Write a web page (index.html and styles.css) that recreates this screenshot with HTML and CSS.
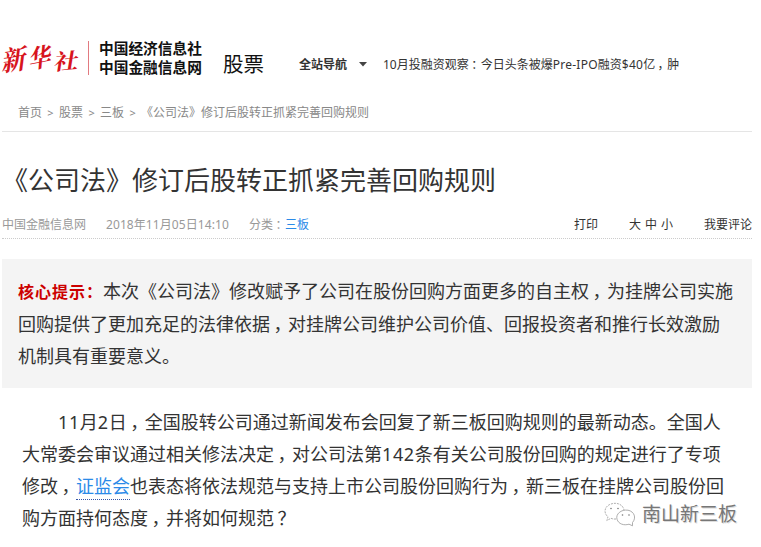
FILE: index.html
```html
<!DOCTYPE html>
<html lang="zh-CN">
<head>
<meta charset="utf-8">
<title>《公司法》修订后股转正抓紧完善回购规则</title>
<link rel="stylesheet" href="styles.css">
</head>
<body>
<div class="page">
  <header class="header">
    <div class="brush"><span class="b1">新</span><span class="b2">华</span><span class="b3">社</span></div>
    <div class="agency"><div>中国经济信息社</div><div>中国金融信息网</div></div>
    <div class="channel">股票</div>
    <div class="nav">全站导航</div>
    <svg class="caret" width="8" height="5" viewBox="0 0 8 5"><path d="M0 0h8L4 4.5z" fill="#444"/></svg>
    <div class="ticker">10月投融资观察<i>：</i>今日头条被爆<span class="latin">Pre-IPO</span>融资<span class="latin">$40</span>亿<i>，</i>肿</div>
  </header>
  <nav class="crumbs"><span>首页</span><b>&gt;</b><span>股票</span><b>&gt;</b><span>三板</span><b>&gt;</b><span>《公司法》修订后股转正抓紧完善回购规则</span></nav>
  <h1 class="title">《公司法》修订后股转正抓紧完善回购规则</h1>
  <div class="meta">
    <span class="source">中国金融信息网</span>
    <span class="date">2018年11月05日14:10</span>
    <span>分类<i>：</i><a>三板</a></span>
    <div class="tools"><span>打印</span><span class="sizes"><span>大</span><span>中</span><span>小</span></span><span>我要评论</span></div>
  </div>
  <section class="summary">
    <div><strong>核心提示：</strong>本次《公司法》修改赋予了公司在股份回购方面更多的自主权<i>，</i>为挂牌公司实施</div>
    <div>回购提供了更加充足的法律依据<i>，</i>对挂牌公司维护公司价值、回报投资者和推行长效激励</div>
    <div>机制具有重要意义。</div>
  </section>
  <article class="article">
    <div class="first"><span class="num">11</span>月<span class="num">2</span>日<i>，</i>全国股转公司通过新闻发布会回复了新三板回购规则的最新动态。全国人</div>
    <div>大常委会审议通过相关修法决定<i>，</i>对公司法第<span class="num">142</span>条有关公司股份回购的规定进行了专项</div>
    <div>修改<i>，</i><a class="term">证监会</a>也表态将依法规范与支持上市公司股份回购行为<i>，</i>新三板在挂牌公司股份回</div>
    <div>购方面持何态度<i>，</i>并将如何规范<i class="q">？</i></div>
  </article>
  <div class="watermark">
    <svg width="32" height="25" viewBox="0 0 32 25" fill="none" stroke="#999" stroke-width=".8">
      <path d="M12 17c-2 .2-3.500 0-5-.7L2.800 18.500 4 14.800C-1 11 .5 4 7 2c6-2 12 .5 13 6" stroke-dasharray="2 1"/>
      <path d="M28.500 20.500c4-4.500 2-11-4.500-12.300-7-1-12.500 4-11 9 1.500 5 7 6.500 12 5l3.500 1.600z"/>
      <g fill="#777" stroke="none"><circle cx="7" cy="6.500" r=".8"/><circle cx="14" cy="6.500" r=".8"/><circle cx="18.500" cy="13" r=".8"/><circle cx="25" cy="13" r=".8"/></g>
    </svg>
    <span>南山新三板</span>
  </div>
</div>
</body>
</html>
```
FILE: styles.css
```css
* { box-sizing: border-box; }
body { margin: 0; background: #fff; color: #333; font: 12px/16px "Noto Sans", "Noto Sans CJK SC", sans-serif; }
i { display: inline-block; width: 1em; padding-left: .2em; font-style: normal; font-feature-settings: "halt"; }
a { color: #2b8ae8; }
.page { position: relative; width: 761px; height: 547px; padding: 0 9px 0 2px; overflow: hidden; white-space: nowrap; }
.header { display: flex; align-items: center; height: 100px; padding-top: 29px; }
.brush { display: flex; align-items: center; width: 87px; height: 34px; margin-top: -13px; border-right: 1px solid #e27a80; color: #d7141d; font: 700 26px/34px "Noto Serif CJK SC", "Noto Sans CJK SC", serif; }
.brush span { width: 26px; transform: skewX(-16deg) rotate(-9deg) scale(.9, 1.08); }
.brush .b2 { transform: translateY(-2px) skewX(-16deg) rotate(-12deg) scale(.82, 1.02); }
.brush .b3 { transform: translateY(2px) skewX(-14deg) rotate(-5deg) scale(.92, .85); }
.agency { width: 124px; margin-top: -13px; padding-left: 10px; color: #111; font-size: 14.7px; line-height: 19px; font-weight: 700; }
.channel { width: 78px; margin-top: -2px; padding-left: 10px; color: #111; font-size: 20.5px; line-height: 28px; }
.nav { width: 60px; margin-left: 8px; font-weight: 700; }
.caret { margin-right: 16px; }
.latin { letter-spacing: .25px; }
.crumbs { display: flex; height: 32px; padding: 5px 0 0 16px; border-bottom: 1px solid #e5e5e5; color: #888; }
.crumbs b { width: 17px; text-align: center; font-weight: 400; font-size: 11px; }
.title { height: 78px; margin: 0; padding-top: 30px; font-size: 26px; line-height: 36px; font-weight: 400; }
.meta { display: flex; height: 29px; padding-top: 7px; border-bottom: 1px dotted #ccc; color: #999; }
.source { width: 104px; }
.date { width: 143px; letter-spacing: .08px; }
.tools { display: flex; gap: 31px; margin-left: auto; color: #333; }
.sizes { display: flex; gap: 4px; }
.summary { height: 129px; margin-top: 20px; padding: 16px 16px; background: #f4f4f4; font-size: 18px; line-height: 32px; }
.summary strong { color: #c00; font-size: 16px; letter-spacing: 1px; }
.article { padding: 18px 0 0 20px; font-size: 18px; line-height: 32px; }
.first { padding-left: 36px; }
.num { letter-spacing: .6px; }
.term { padding-bottom: 1px; border-bottom: 1px dotted #3656a8; }
.watermark { position: absolute; left: 604px; top: 501px; display: flex; align-items: center; gap: 6px; color: #777; font-size: 19px; line-height: 26px; text-shadow: 1px 1px 0 #ddd; }
```
